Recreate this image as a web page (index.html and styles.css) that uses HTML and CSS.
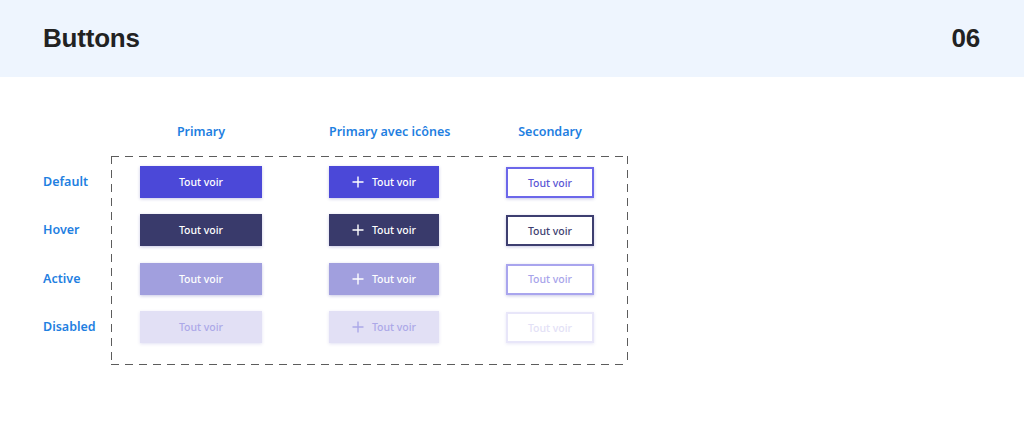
FILE: index.html
```html
<!DOCTYPE html>
<html lang="fr">
<head>
<meta charset="utf-8">
<title>Buttons</title>
<link rel="stylesheet" href="styles.css">
</head>
<body>
<header class="topbar">
  <h1 class="title">Buttons</h1>
  <span class="number">06</span>
</header>
<main class="matrix">
  <div class="corner"></div>
  <div class="col-heads">
    <div class="col-head">Primary</div>
    <div class="col-head">Primary avec icônes</div>
    <div class="col-head">Secondary</div>
  </div>
  <div class="row-labels">
    <div class="row-label">Default</div>
    <div class="row-label">Hover</div>
    <div class="row-label">Active</div>
    <div class="row-label">Disabled</div>
  </div>
  <div class="board">
    <button class="btn prim default">Tout voir</button>
    <button class="btn prim icon default"><svg class="plus" viewBox="0 0 12 12"><path d="M6 0.5V11.5M0.5 6H11.5"/></svg>Tout voir</button>
    <button class="btn sec default">Tout voir</button>

    <button class="btn prim hover">Tout voir</button>
    <button class="btn prim icon hover"><svg class="plus" viewBox="0 0 12 12"><path d="M6 0.5V11.5M0.5 6H11.5"/></svg>Tout voir</button>
    <button class="btn sec hover">Tout voir</button>

    <button class="btn prim active">Tout voir</button>
    <button class="btn prim icon active"><svg class="plus" viewBox="0 0 12 12"><path d="M6 0.5V11.5M0.5 6H11.5"/></svg>Tout voir</button>
    <button class="btn sec active">Tout voir</button>

    <button class="btn prim disabled">Tout voir</button>
    <button class="btn prim icon disabled"><svg class="plus" viewBox="0 0 12 12"><path d="M6 0.5V11.5M0.5 6H11.5"/></svg>Tout voir</button>
    <button class="btn sec disabled">Tout voir</button>
  </div>
</main>
</body>
</html>
```

FILE: styles.css
```css
* { box-sizing: border-box; }
html, body { margin: 0; padding: 0; background: #ffffff; }
body { font-family: "Noto Sans", Lato, sans-serif; }

.topbar {
  height: 77px;
  background: #eef5fe;
  display: flex;
  align-items: center;
  justify-content: space-between;
  padding: 0 44px 0 43px;
}
.title, .number {
  margin: 0;
  font-family: "Liberation Sans", Arial, sans-serif;
  font-weight: 700;
  font-size: 26px;
  color: #222222;
  letter-spacing: -0.2px;
}

.matrix {
  display: grid;
  grid-template-columns: 68px auto;
  grid-template-rows: auto auto;
  justify-content: start;
  padding: 47px 0 0 43px;
}

.col-heads {
  display: grid;
  grid-template-columns: 122px 110px 88px;
  column-gap: 67px;
  padding: 0 0 16px 29px;
}
.col-head, .row-label {
  font-size: 12.5px;
  font-weight: 600;
  color: #1f80e1;
  line-height: 16px;
  white-space: nowrap;
}
.col-head { text-align: center; }

.row-labels {
  display: flex;
  flex-direction: column;
  gap: 16.4px;
  padding-top: 10px;
}
.row-label {
  height: 32px;
  display: flex;
  align-items: center;
}

.board {
  display: grid;
  grid-template-columns: 122px 110px 88px;
  grid-auto-rows: 32px;
  column-gap: 67px;
  row-gap: 16.4px;
  padding: 10px 34px 22px 29px;
  justify-items: start;
  background:
    repeating-linear-gradient(90deg, #5c5c5c 0 8px, transparent 8px 14px) left top / 100% 1px no-repeat,
    repeating-linear-gradient(90deg, #5c5c5c 0 8px, transparent 8px 14px) left bottom / 100% 1px no-repeat,
    repeating-linear-gradient(180deg, #5c5c5c 0 8px, transparent 8px 14px) left top / 1px 100% no-repeat,
    repeating-linear-gradient(180deg, #5c5c5c 0 8px, transparent 8px 14px) right top / 1px 100% no-repeat;
}

.btn {
  height: 32px;
  margin: 0;
  padding: 0;
  border: 0;
  border-radius: 0;
  font-family: "Noto Sans", Lato, sans-serif;
  font-size: 10.5px;
  font-weight: 500;
  display: flex;
  align-items: center;
  justify-content: center;
  gap: 8px;
  box-shadow: 0 1px 3px rgba(60, 58, 160, 0.28);
  cursor: pointer;
}
.prim { width: 122px; color: #ffffff; }
.prim.icon { width: 110px; }
.sec { width: 88px; background: #ffffff; border: 2px solid; margin-top: 1px; height: 31px; }

.prim.default { background: #4b48d8; }
.prim.hover { background: #393a6b; }
.prim.active { background: #a19fde; }
.prim.disabled { background: #e2e0f5; color: #aca8e8; box-shadow: 0 1px 3px rgba(140, 135, 210, 0.25); }

.sec.default { border-color: #6c67ea; color: #5a55d4; }
.sec.hover { border-color: #3d3e70; color: #3d3e70; }
.sec.active { border-color: #a9a5ee; color: #a7a3ea; }
.sec.disabled { border-color: #e8e6f9; color: #e3e1f6; box-shadow: 0 1px 3px rgba(140, 135, 210, 0.2); }

.plus {
  width: 12px;
  height: 12px;
  fill: none;
  stroke: currentColor;
  stroke-width: 1.4;
  flex: none;
}
```
